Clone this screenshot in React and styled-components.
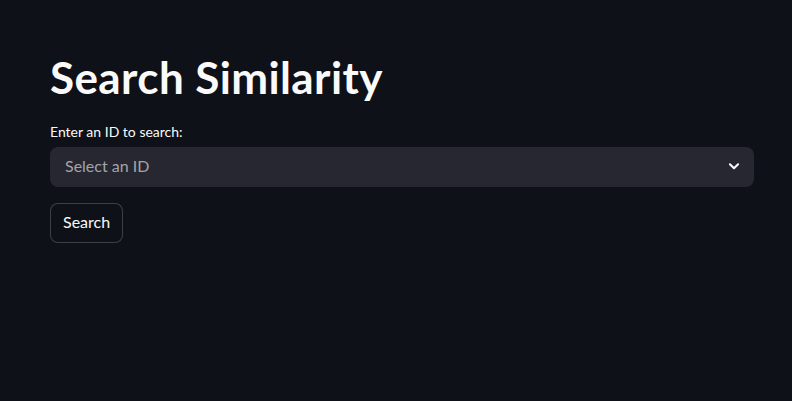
import React from 'react';
import styled, { createGlobalStyle } from 'styled-components';

const GlobalStyle = createGlobalStyle`
  html, body {
    margin: 0;
    padding: 0;
    background: #0e1117;
  }
  body {
    font-family: Lato, "Noto Sans", sans-serif;
    color: #fafafa;
  }
`;

const Page = styled.main`
  min-height: 401px;
  box-sizing: border-box;
  padding: 50px 38px 0 50px;
  display: flex;
  flex-direction: column;
`;

const Title = styled.h1`
  margin: 0;
  font-size: 44px;
  font-weight: 700;
  line-height: 54px;
  letter-spacing: 0.4px;
  color: #fafafa;
`;

const Label = styled.label`
  margin-top: 18px;
  font-size: 14px;
  line-height: 20px;
  color: #fafafa;
`;

const Select = styled.div`
  margin-top: 5px;
  height: 40px;
  box-sizing: border-box;
  background: #262730;
  border-radius: 8px;
  padding: 0 13px 3px 15px;
  display: flex;
  align-items: center;
  justify-content: space-between;
`;

const Placeholder = styled.span`
  font-size: 16px;
  color: rgba(250, 250, 250, 0.6);
`;

const Button = styled.button`
  margin-top: 16px;
  align-self: flex-start;
  height: 40px;
  padding: 0 12px 3px;
  background: #0e1117;
  border: 1px solid rgba(250, 250, 250, 0.2);
  border-radius: 8px;
  color: #fafafa;
  font-family: inherit;
  font-size: 16px;
`;

function Chevron() {
  return (
    <svg width="14" height="14" viewBox="0 0 24 24" fill="none" stroke="#fafafa" strokeWidth="3.5" strokeLinecap="round" strokeLinejoin="round">
      <polyline points="5 9 12 16 19 9" />
    </svg>
  );
}

export default function App() {
  return (
    <>
      <GlobalStyle />
      <Page>
        <Title>Search Similarity</Title>
        <Label>Enter an ID to search:</Label>
        <Select>
          <Placeholder>Select an ID</Placeholder>
          <Chevron />
        </Select>
        <Button>Search</Button>
      </Page>
    </>
  );
}
